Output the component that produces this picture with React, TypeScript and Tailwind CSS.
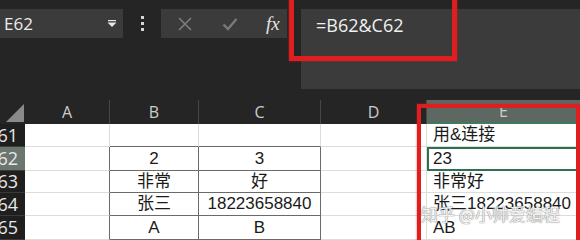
import React from "react";

const cols = [
  { label: "A", w: "w-[85px]" },
  { label: "B", w: "w-[89px]" },
  { label: "C", w: "w-[122px]" },
  { label: "D", w: "w-[106px]" },
  { label: "E", w: "w-[153px]" },
];

const rows = [
  { n: 61, h: "h-[23px]", cells: ["", "", "", "", "用&连接"] },
  { n: 62, h: "h-[24px]", cells: ["", "2", "3", "", "23"] },
  { n: 63, h: "h-[22px]", cells: ["", "非常", "好", "", "非常好"] },
  { n: 64, h: "h-[23px]", cells: ["", "张三", "18223658840", "", "张三18223658840"] },
  { n: 65, h: "h-[24px]", cells: ["", "A", "B", "", "AB"] },
];

// which grid lines belong to the bordered B62:C65 table
const cellBorder = (r: number, c: number) => {
  const inTable = r >= 62 && (c === 1 || c === 2);
  const right = inTable || (r >= 62 && c === 0) ? "border-r-[#6a6a6a]" : "border-r-[#dcdcdc]";
  const bottom = inTable || (r === 61 && (c === 1 || c === 2)) ? "border-b-[#6a6a6a]" : "border-b-[#dcdcdc]";
  return `${right} ${bottom}`;
};

const Cell = ({ r, c, text }: { r: number; c: number; text: string }) => {
  const selected = r === 62 && c === 4;
  const centered = c === 1 || c === 2;
  if (selected) {
    return (
      <div className={`${cols[c].w} h-full relative flex items-center pl-[4px] border-2 border-[#2e7050] bg-white`}>
        {text}
        <div className="absolute right-[-3px] bottom-[-3px] w-[5px] h-[5px] bg-[#2e7050] border border-white" />
      </div>
    );
  }
  return (
    <div
      className={`${cols[c].w} h-full flex items-center border-r border-b bg-white ${cellBorder(r, c)} ${
        centered ? "justify-center" : "pl-[6px]"
      }`}
    >
      {text}
    </div>
  );
};

export default function App() {
  return (
    <div className="w-[580px] h-[240px] overflow-hidden relative bg-[#252525] font-['Liberation_Sans','Noto_Sans_CJK_SC',sans-serif]">
      {/* Toolbar / formula bar */}
      <div className="h-[100px] flex items-start pt-[9px]">
        <div className="w-[123px] h-[29px] bg-[#3b3b3b] flex items-center justify-between pl-[4px] pr-[6px] text-[17px] text-[#ececec] font-['Open_Sans',sans-serif]">
          <span>E62</span>
          <svg width="10" height="8" viewBox="0 0 10 8">
            <rect x="1" y="0" width="8" height="1.2" fill="#e8e8e8" />
            <path d="M0.5 2.5 L9.5 2.5 L5 7 Z" fill="#e8e8e8" />
          </svg>
        </div>
        <div className="w-[38px] h-[29px] flex flex-col items-center justify-center gap-[3px]">
          <div className="w-[3px] h-[3px] bg-[#d6d6d6]" />
          <div className="w-[3px] h-[3px] bg-[#d6d6d6]" />
          <div className="w-[3px] h-[3px] bg-[#d6d6d6]" />
        </div>
        <div className="w-[126px] h-[29px] bg-[#3b3b3b] flex items-center pl-[16px]">
          <svg width="16" height="16" viewBox="0 0 16 16">
            <path d="M2 2 L14 14 M14 2 L2 14" stroke="#7d7d7d" strokeWidth="1.6" />
          </svg>
          <svg width="16" height="16" viewBox="0 0 16 16" className="ml-[29px]">
            <path d="M1.5 8.5 L6 13 L14.5 3" stroke="#7a7a7a" strokeWidth="2.4" fill="none" />
          </svg>
          <span className="ml-[28px] text-[19px] leading-none italic text-[#e4e4e4] font-['Liberation_Serif',serif]">
            fx
          </span>
        </div>
        <div className="w-[14px]" />
        <div className="flex-1 h-[80px] bg-[#3b3b3b] pl-[15px] pt-[3px] text-[18px] text-[#f0f0f0] font-['Open_Sans',sans-serif]">
          =B62&amp;C62
        </div>
      </div>

      {/* Column headers */}
      <div className="h-[24px] flex text-[16px] text-[#cdcdcd] font-['Open_Sans',sans-serif]">
        <div className="w-[25px] h-full flex items-end justify-end pb-[2px] pr-[1px]">
          <svg width="18" height="18" viewBox="0 0 18 18">
            <path d="M18 0 L18 18 L0 18 Z" fill="#8a8a8a" />
          </svg>
        </div>
        {cols.map((c) =>
          c.label === "E" ? (
            <div key={c.label} className={`${c.w} h-full flex items-center justify-center bg-[#5d6863] border-b-2 border-b-[#3f7a5c]`}>
              {c.label}
            </div>
          ) : (
            <div key={c.label} className={`${c.w} h-full flex items-center justify-center border-r border-r-[#474747]`}>
              {c.label}
            </div>
          )
        )}
      </div>

      {/* Rows */}
      <div className="flex flex-col text-[17px] text-[#1a1a1a]">
        {rows.map((row) => (
          <div key={row.n} className={`${row.h} flex`}>
            <div
              className={`w-[25px] h-full flex items-center justify-end pr-[7px] overflow-hidden border-b border-b-[#3a3a3a] text-[18px] text-[#e8e8e8] font-['Open_Sans',sans-serif] ${
                row.n === 62 ? "bg-[#6c7671]" : "bg-[#1f1f1f]"
              }`}
            >
              <span className="shrink-0">{row.n}</span>
            </div>
            {row.cells.map((t, i) => (
              <Cell key={i} r={row.n} c={i} text={t} />
            ))}
          </div>
        ))}
      </div>

      {/* Watermark */}
      <div className="absolute left-[421px] top-[201px] text-[17px] text-white/90 font-['Noto_Sans_CJK_SC',sans-serif] [text-shadow:0_0_1px_#777,0_0_1px_#888]">
        知乎 @小帅爱编程
      </div>

      {/* Red highlight boxes */}
      <div className="absolute left-[289px] top-[-6px] w-[168px] h-[67px] border-[5px] border-[#df1f1f] shadow-[0_0_2px_rgba(220,30,30,0.7)]" />
      <div className="absolute left-[417px] top-[104px] w-[163px] h-[160px] border-[4px] border-[#df1f1f] shadow-[0_0_2px_rgba(220,30,30,0.7)]" />
    </div>
  );
}
